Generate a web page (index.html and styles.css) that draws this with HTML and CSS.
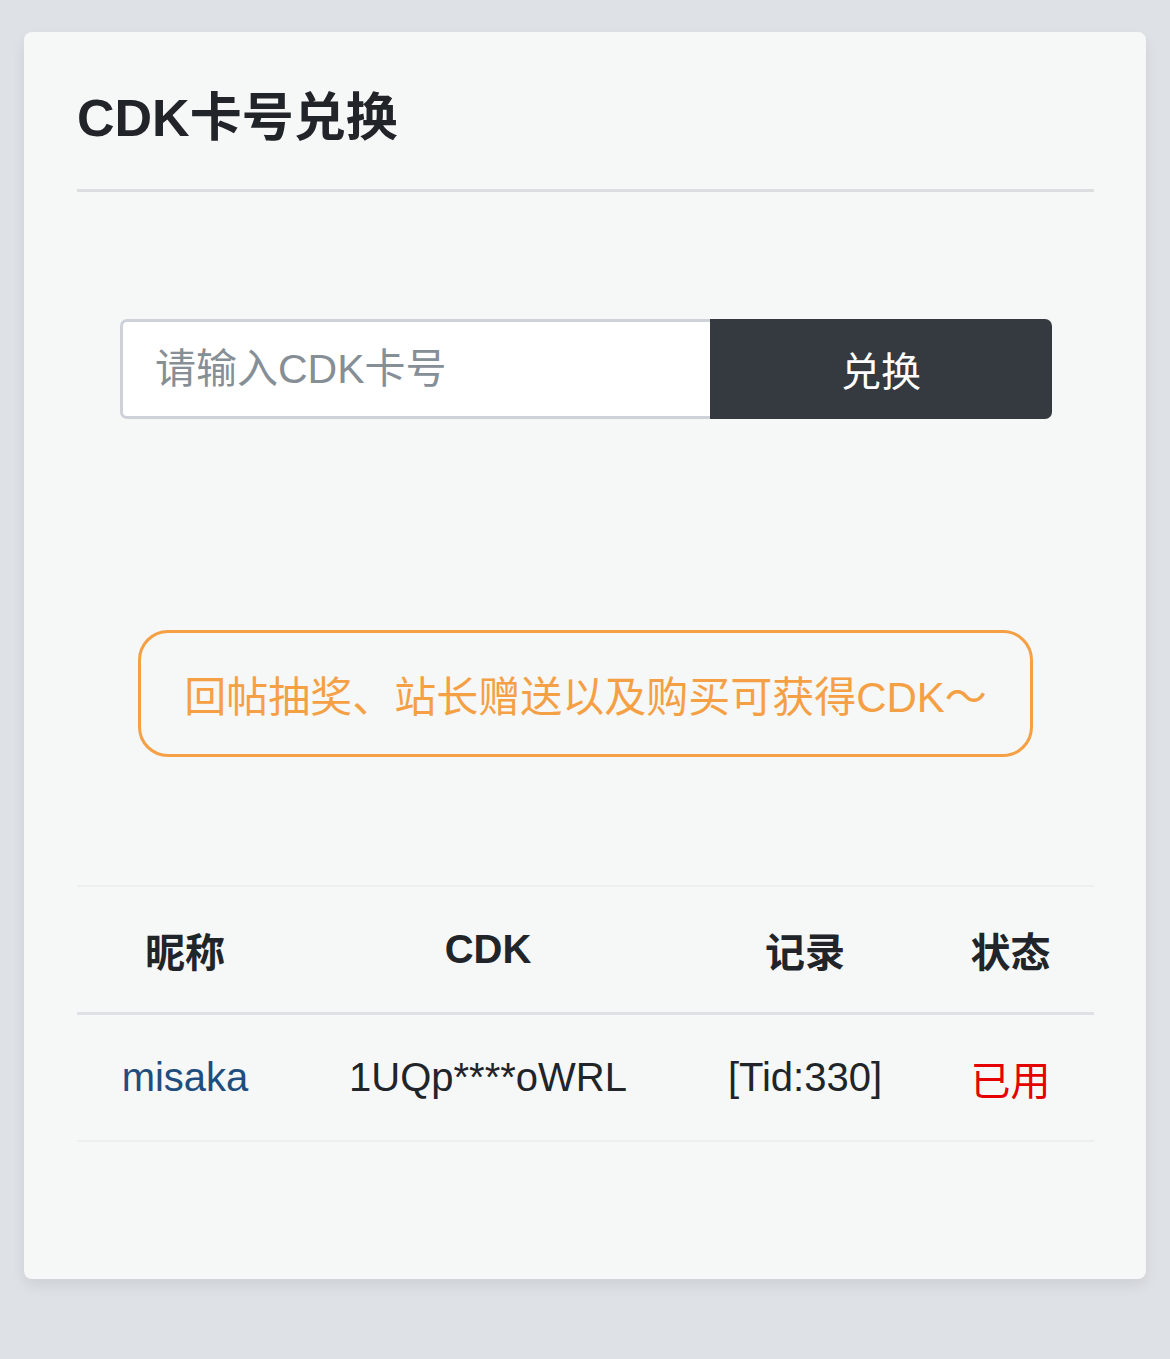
FILE: index.html
```html
<!DOCTYPE html>
<html lang="zh-CN">
<head>
  <meta charset="UTF-8" />
  <meta name="viewport" content="width=device-width, initial-scale=1.0" />
  <title>CDK卡号兑换</title>
  <link rel="stylesheet" href="styles.css">
</head>
<body>
  <div class="card">
    <h2 class="card-title">CDK卡号兑换</h2>

    <!-- 兑换输入 -->
    <div class="redeem">
      <input type="text" class="redeem-input" placeholder="请输入CDK卡号">
      <button class="redeem-btn">兑换</button>
    </div>

    <div class="notice">回帖抽奖、站长赠送以及购买可获得CDK～</div>

    <table class="records">
      <colgroup>
        <col class="c-name">
        <col class="c-cdk">
        <col class="c-log">
        <col class="c-state">
      </colgroup>
      <thead>
        <tr>
          <th>昵称</th>
          <th>CDK</th>
          <th>记录</th>
          <th>状态</th>
        </tr>
      </thead>
      <tbody>
        <tr>
          <td><a href="#" class="user">misaka</a></td>
          <td>1UQp****oWRL</td>
          <td>[Tid:330]</td>
          <td class="used">已用</td>
        </tr>
      </tbody>
    </table>
  </div>
</body>
</html>
```

FILE: styles.css
```css
body {
  margin: 0;
  background: #dee1e5;
  font-family: "Liberation Sans", "Noto Sans CJK SC", sans-serif;
  color: #212529;
}
.card {
  margin: 32px 24px 80px;
  background: #f6f8f8;
  border-radius: 8px;
  padding: 54px 52px 137px 53px;
  box-shadow: 0 6px 14px rgba(0,0,0,0.08);
}
.card-title {
  margin: 0;
  font-size: 52px;
  font-weight: 600;
  line-height: 64px;
  padding-bottom: 39px;
  border-bottom: 3px solid #dcdedf;
}
.redeem {
  display: flex;
  margin: 127px 42px 0 43px;
  height: 100px;
}
.redeem-input {
  flex: 0 0 590px;
  width: 590px;
  min-width: 0;
  box-sizing: border-box;
  border: 3px solid #ced2d8;
  border-right: none;
  border-radius: 7px 0 0 7px;
  background: #fff;
  padding: 0 32px;
  font-family: inherit;
  font-size: 41px;
  outline: none;
}
.redeem-input::placeholder {
  color: #868e96;
}
.redeem-btn {
  flex: 1;
  background: #343a40;
  color: #fff;
  border: none;
  border-radius: 0 7px 7px 0;
  font-family: inherit;
  font-size: 40px;
  cursor: pointer;
}
.notice {
  margin: 211px 61px 0;
  height: 121px;
  border: 3px solid #f5a044;
  border-radius: 30px;
  color: #f5a044;
  font-size: 42px;
  display: flex;
  align-items: center;
  justify-content: center;
}
.records {
  width: 100%;
  margin-top: 128px;
  border-collapse: collapse;
  table-layout: fixed;
  font-size: 40px;
}
.c-name { width: 216px; }
.c-cdk { width: 390px; }
.c-log { width: 244px; }
.records th,
.records td {
  text-align: center;
  height: 125px;
  padding: 0;
}
.records th {
  font-weight: bold;
  border-top: 2px solid #eceeef;
  border-bottom: 3px solid #dee2e6;
}
.records td {
  border-bottom: 2px solid #eceeef;
}
.user {
  color: #1f4d7e;
  text-decoration: none;
}
.used {
  color: #e60000;
}
```
